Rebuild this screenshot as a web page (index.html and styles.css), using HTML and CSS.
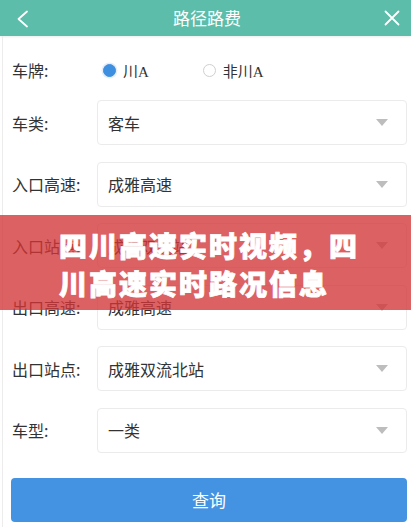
FILE: index.html
```html
<!DOCTYPE html>
<html lang="zh-CN">
<head>
  <meta charset="UTF-8" />
  <meta name="viewport" content="width=device-width, initial-scale=1.0"/>
  <title>路径路费</title>
  <link rel="stylesheet" href="styles.css">
</head>
<body>
  <div class="topbar">
    <svg class="back" width="14" height="18" viewBox="0 0 14 18">
      <polyline points="11,1.5 2.5,9 11,16.5" fill="none" stroke="#fff" stroke-width="1.8" stroke-linecap="round" stroke-linejoin="round"/>
    </svg>
    <h1>路径路费</h1>
    <svg class="close" width="16" height="16" viewBox="0 0 16 16">
      <path d="M1.5 1.5 L14.5 14.5 M14.5 1.5 L1.5 14.5" stroke="#fff" stroke-width="1.8" stroke-linecap="round"/>
    </svg>
  </div>

  <div class="form">
    <div class="row radio-row">
      <label class="label">车牌:</label>
      <div class="radios">
        <span class="radio checked"></span><span class="radio-text">川A</span>
        <span class="radio"></span><span class="radio-text">非川A</span>
      </div>
    </div>

    <div class="row">
      <label class="label">车类:</label>
      <div class="select">客车<span class="arrow"></span></div>
    </div>
    <div class="row">
      <label class="label">入口高速:</label>
      <div class="select">成雅高速<span class="arrow"></span></div>
    </div>
    <div class="row">
      <label class="label">入口站点:</label>
      <div class="select">成雅双流站<span class="arrow"></span></div>
    </div>
    <div class="row">
      <label class="label">出口高速:</label>
      <div class="select">成雅高速<span class="arrow"></span></div>
    </div>
    <div class="row">
      <label class="label">出口站点:</label>
      <div class="select">成雅双流北站<span class="arrow"></span></div>
    </div>
    <div class="row">
      <label class="label">车型:</label>
      <div class="select">一类<span class="arrow"></span></div>
    </div>

    <button class="submit">查询</button>
  </div>

  <div class="banner">
    <div class="banner-text">四川高速实时视频，四川高速实时路况信息</div>
  </div>
</body>
</html>
```

FILE: styles.css
```css
body {
  margin: 0;
  background-color: #fff;
  font-family: "Noto Sans CJK SC", "Noto Sans", sans-serif;
  color: #333;
}

.topbar {
  height: 36px;
  background-color: #5bbdaa;
  display: flex;
  align-items: center;
  justify-content: space-between;
  padding: 0 11px 0 16px;
  box-shadow: 0 1px 2px rgba(0, 0, 0, 0.08);
}

.topbar h1 {
  margin: 0;
  font-size: 17px;
  font-weight: normal;
  color: #fff;
  line-height: 36px;
}

.back {
  margin-top: 1px;
}

.close {
  margin-top: -1px;
}

.form {
  margin-left: 2px;
  border-left: 1px solid #ececec;
  padding: 12px 4px 10px 9px;
}

.row {
  display: flex;
  align-items: center;
  height: 45px;
  margin-bottom: 16.6px;
}

.radio-row {
  height: 44px;
  margin-bottom: 8px;
}

.label {
  width: 85px;
  font-size: 16px;
  color: #333;
}

.radios {
  display: flex;
  align-items: center;
  padding-left: 6px;
}

.radio {
  width: 11px;
  height: 11px;
  border-radius: 50%;
  border: 1px solid #cfcfcf;
  background-color: #fff;
}

.radio.checked {
  background-color: #3f8fe0;
  border-color: #3f8fe0;
  box-shadow: 0 0 0 1.5px #e6eef8;
}

.radio-text {
  font-family: "Liberation Serif", "Noto Sans CJK SC", serif;
  font-size: 15px;
  color: #333;
  margin-left: 7px;
  margin-right: 54px;
}

.select {
  flex: 1;
  height: 45px;
  box-sizing: border-box;
  border: 1px solid #ebebeb;
  border-radius: 4px;
  display: flex;
  align-items: center;
  justify-content: space-between;
  padding: 0 18px 0 10px;
  font-size: 16px;
  color: #333;
}

.arrow {
  width: 0;
  height: 0;
  border-left: 6px solid transparent;
  border-right: 6px solid transparent;
  border-top: 7px solid #bdbdbd;
}

.submit {
  display: block;
  width: 396px;
  height: 44px;
  margin: 25px 0 0 -1px;
  background-color: #4493e3;
  border: none;
  border-radius: 4px;
  color: #fff;
  font-family: "Noto Sans CJK SC", sans-serif;
  font-size: 17px;
}

.banner {
  position: absolute;
  left: 0;
  top: 215px;
  width: 100%;
  height: 95px;
  background-color: rgba(210, 52, 54, 0.78);
}

.banner-text {
  width: 305px;
  padding: 12px 0 0 59px;
  font-size: 28px;
  font-weight: 900;
  letter-spacing: 2px;
  line-height: 37.5px;
  color: #fff;
  -webkit-text-stroke: 0.8px #fff;
}
```
